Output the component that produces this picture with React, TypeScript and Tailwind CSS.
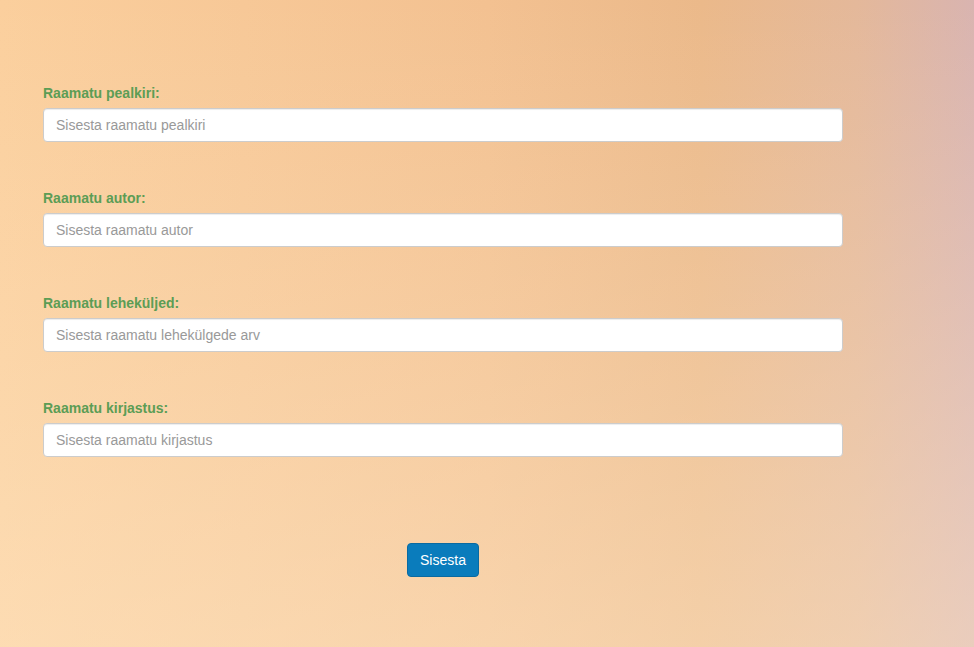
const fields = [
  { label: 'Raamatu pealkiri:', placeholder: 'Sisesta raamatu pealkiri' },
  { label: 'Raamatu autor:', placeholder: 'Sisesta raamatu autor' },
  { label: 'Raamatu leheküljed:', placeholder: 'Sisesta raamatu lehekülgede arv' },
  { label: 'Raamatu kirjastus:', placeholder: 'Sisesta raamatu kirjastus' },
]

export default function App() {
  return (
    <div className="min-h-[647px] w-full bg-[linear-gradient(to_bottom,rgba(255,235,205,0)_0%,rgba(255,235,205,0.45)_100%),linear-gradient(to_right,#fbcf9d_0%,#f3c191_50%,#ebb98a_72%,#e4b89a_88%,#d9b4b0_100%)] font-['Liberation_Sans',Arial,sans-serif]">
      <form className="flex w-[800px] flex-col pt-[83px] pl-[43px] box-content">
        {fields.map((f) => (
          <div key={f.label} className="mb-[46px] flex flex-col">
            <label className="mb-[5px] h-5 text-sm leading-5 font-bold text-[#5c9d55]">
              {f.label}
            </label>
            <input
              type="text"
              placeholder={f.placeholder}
              className="h-[34px] w-full rounded border border-[#ccc] bg-white px-3 text-sm text-[#555] shadow-[inset_0_1px_1px_rgba(0,0,0,0.075)] placeholder:text-[#999] outline-none"
            />
          </div>
        ))}
        <div className="mt-10 flex justify-center">
          <button
            type="button"
            className="h-[34px] w-[72px] rounded border border-[#0a6aa1] bg-[#0a7cbc] text-sm text-white"
          >
            Sisesta
          </button>
        </div>
      </form>
    </div>
  )
}
